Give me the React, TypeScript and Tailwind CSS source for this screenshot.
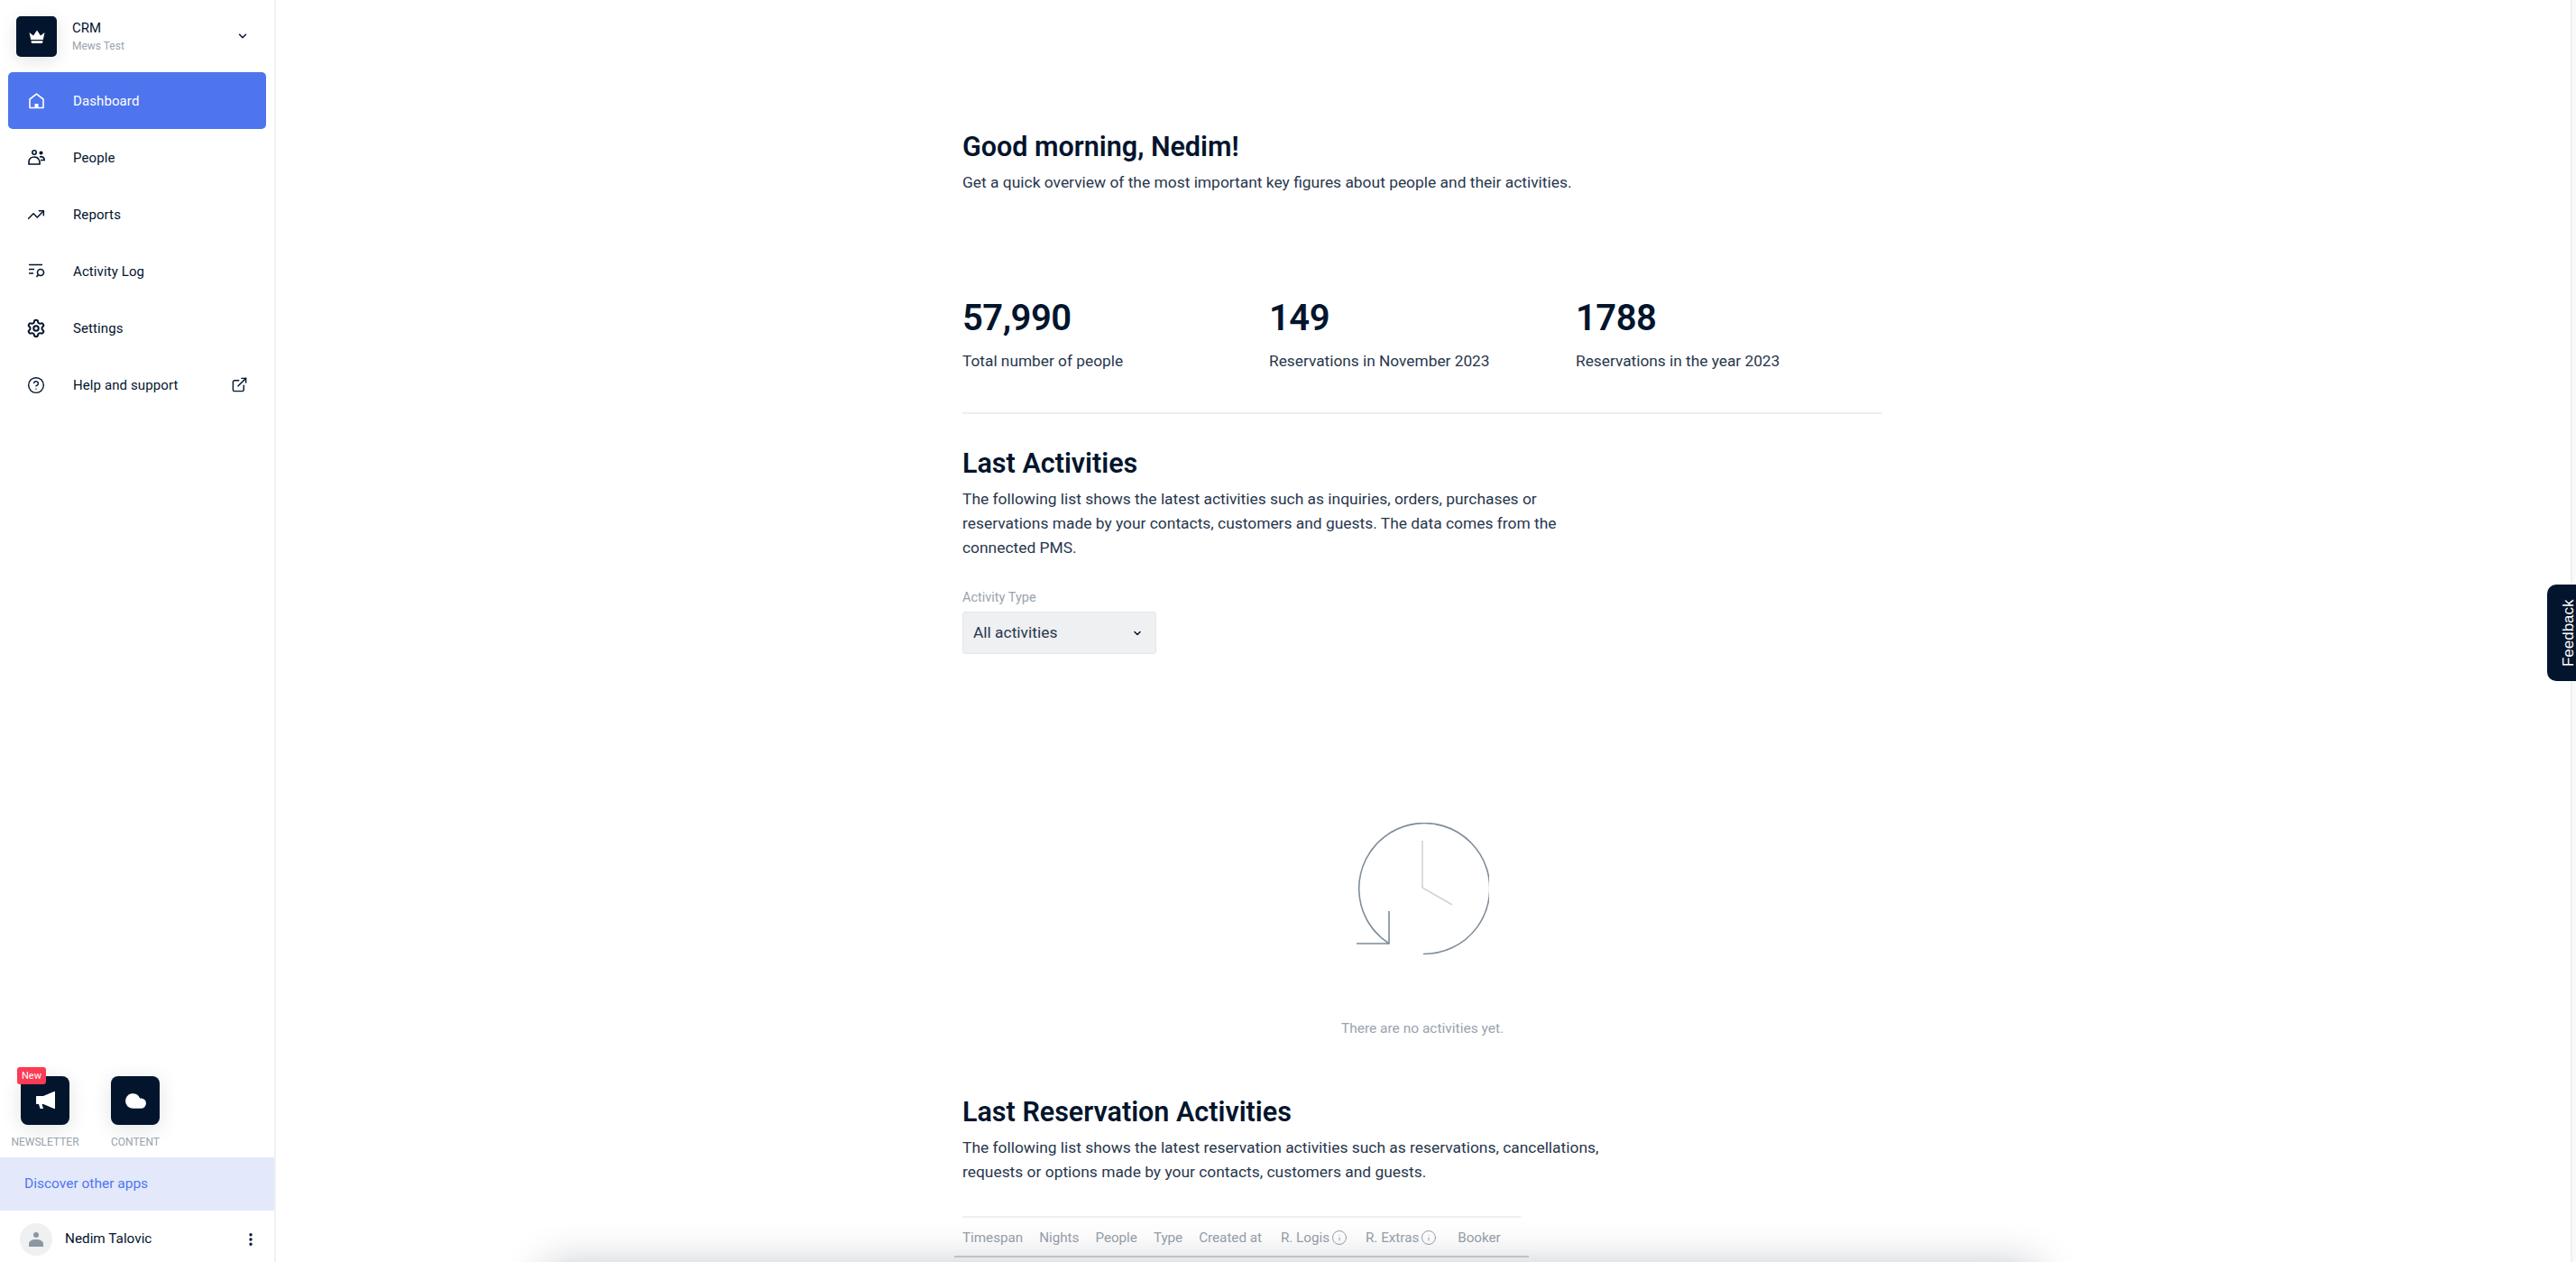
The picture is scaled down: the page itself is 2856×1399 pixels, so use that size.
import { ChevronDown, ExternalLink, EllipsisVertical, Settings, CircleHelp, TrendingUp, Info, Cloud } from "lucide-react";

const font = { fontFamily: '"Roboto", "Noto Sans", sans-serif' };

function HomeIcon() {
  return (
    <svg width="17" height="18" viewBox="0 0 17 18" fill="none" stroke="currentColor" strokeWidth="1.6" strokeLinejoin="round">
      <path d="M8.500 1.200 1 7v9.500h15V7z" />
      <rect x="6.500" y="12" width="4" height="4.500" fill="currentColor" stroke="none" />
    </svg>
  );
}

function CrownIcon() {
  return (
    <svg width="18" height="15" viewBox="0 0 18 15" fill="white">
      <path d="M0.500 3 5 6.500 9 0.500 13 6.500 17.500 3 15.800 11H2.200z" />
      <path d="M2.500 12.300h13L15 15H3z" />
    </svg>
  );
}

function MegaphoneIcon() {
  return (
    <svg width="21" height="20" viewBox="0 0 21 20" fill="white">
      <path d="M0 6c0-.6.4-1 1-1h7l12-5h1v19h-1L8 14H6.500l1.500 5H4.500L3 14H1c-.6 0-1-.4-1-1z" />
    </svg>
  );
}

function PeopleIcon() {
  return (
    <svg width="19" height="17" viewBox="0 0 19 17" fill="none" stroke="currentColor" strokeWidth="1.6">
      <circle cx="7" cy="3" r="2.200" />
      <circle cx="14.500" cy="3.500" r="1.300" fill="currentColor" />
      <path d="M1 16v-2.500C1 10 3.800 8 7 8c2.400 0 4.300 1 5.200 3 .5 1 .8 2 .8 3v2z" />
      <path d="M13 8c2.800-1 5.200.5 5.200 3.500H14" />
    </svg>
  );
}

function LogIcon() {
  return (
    <svg width="19" height="17" viewBox="0 0 19 17" fill="none" stroke="currentColor" strokeWidth="1.600">
      <path d="M1 1.500h15M1 6.500h6M1 11h5" />
      <circle cx="14" cy="10" r="3.500" />
      <path d="M11.500 12.500 9.500 15" />
    </svg>
  );
}

function NavItem({ icon, label, active, trailing }: { icon: React.ReactNode; label: string; active?: boolean; trailing?: React.ReactNode }) {
  return (
    <div className={`mx-[9px] flex h-[63px] items-center rounded-[5px] ${active ? "bg-[#4f75ee] text-white" : "text-[#03152d]"}`}>
      <div className="mr-[10px] flex w-[62px] shrink-0 justify-center">{icon}</div>
      <span className="pt-[2px] text-[15px] tracking-[0.1px]">{label}</span>
      {trailing && <div className="ml-auto mr-[20px]">{trailing}</div>}
    </div>
  );
}

function Sidebar() {
  return (
    <aside className="flex h-[1399px] w-[306px] shrink-0 flex-col border-r-2 border-[#f0f1f3] bg-white">
      <div className="flex h-[80px] items-center pl-[18px] pr-[28px]">
        <div className="flex h-[45px] w-[45px] items-center justify-center rounded-[5px] bg-[#03152d] shadow-[0_4px_18px_rgba(3,21,45,0.12)]">
          <CrownIcon />
        </div>
        <div className="ml-[17px] flex-1">
          <div className="text-[15px] leading-[20px] text-[#03152d]">CRM</div>
          <div className="mt-[2px] text-[12px] leading-[16px] text-[#9aa3ae]">Mews Test</div>
        </div>
        <ChevronDown size={14} strokeWidth={2.5} className="text-[#03152d]" />
      </div>
      <nav className="flex flex-col">
        <NavItem active label="Dashboard" icon={<HomeIcon />} />
        <NavItem label="People" icon={<PeopleIcon />} />
        <NavItem label="Reports" icon={<TrendingUp size={20} strokeWidth={1.8} />} />
        <NavItem label="Activity Log" icon={<LogIcon />} />
        <NavItem label="Settings" icon={<Settings size={22} strokeWidth={2.2} />} />
        <NavItem label="Help and support" icon={<CircleHelp size={20} strokeWidth={1.7} />} trailing={<ExternalLink size={19} strokeWidth={1.8} />} />
      </nav>
      <div className="mt-auto flex items-start pb-[10px] pl-[12px]">
        <div className="flex w-[76px] flex-col items-center">
          <div className="relative flex h-[54px] w-[54px] items-center justify-center rounded-[8px] bg-[#03152d] shadow-[0_4px_22px_rgba(3,21,45,0.12)]">
            <MegaphoneIcon />
            <span className="absolute left-[-4px] top-[-10px] rounded-[3px] bg-[#fb3a54] px-[5px] text-[11px] leading-[19px] text-white">New</span>
          </div>
          <span className="mt-[12px] text-[12px] leading-[14px] text-[#9aa3ae]">NEWSLETTER</span>
        </div>
        <div className="ml-[24px] flex w-[76px] flex-col items-center">
          <div className="flex h-[54px] w-[54px] items-center justify-center rounded-[8px] bg-[#03152d] shadow-[0_4px_22px_rgba(3,21,45,0.12)]">
            <Cloud size={25} fill="white" stroke="white" />
          </div>
          <span className="mt-[12px] text-[12px] leading-[14px] text-[#9aa3ae]">CONTENT</span>
        </div>
      </div>
      <div className="flex h-[59px] items-center bg-[#e3e9fb] pl-[27px] text-[15.500px] text-[#4f75ee]">Discover other apps</div>
      <div className="flex h-[57px] items-center pl-[22px] pr-[17px] pt-[6px]">
        <div className="flex h-[36px] w-[36px] items-center justify-center rounded-full bg-[#eef0f2]">
          <svg width="16" height="17" viewBox="0 0 16 17" fill="#8d97a3">
            <circle cx="8" cy="4" r="3" />
            <path d="M0 17v-3c0-3 3-5 8-5s8 2 8 5v3z" />
          </svg>
        </div>
        <span className="ml-[14px] flex-1 text-[15.300px] text-[#03152d]">Nedim Talovic</span>
        <EllipsisVertical size={18} strokeWidth={2.5} className="text-[#03152d]" />
      </div>
    </aside>
  );
}

function Stat({ value, label }: { value: string; label: string }) {
  return (
    <div className="w-[341px]">
      <div className="text-[40px] font-semibold leading-[50px] tracking-[-0.5px] text-[#03152d]">{value}</div>
      <div className="mt-[10px] text-[17.300px] leading-[24px] text-[#28374d]">{label}</div>
    </div>
  );
}

function Th({ children, info, className = "" }: { children: string; info?: boolean; className?: string }) {
  return (
    <span className={`flex items-center gap-[2px] whitespace-nowrap pt-[3px] text-[15.200px] text-[#97a1ac] ${className}`}>
      {children}
      {info && <Info size={18} strokeWidth={1.2} className="text-[#8d97a3]" />}
    </span>
  );
}

function Main() {
  return (
    <main className="relative h-[1399px] flex-1 overflow-hidden bg-white pr-[2px]">
      <div className="mx-auto w-[1020px] pt-[144px]">
        <h1 className="text-[30.500px] font-semibold leading-[38px] text-[#03152d]">Good morning, Nedim!</h1>
        <p className="mt-[8px] text-[17.400px] leading-[24px] text-[#28374d]">Get a quick overview of the most important key figures about people and their activities.</p>
        <div className="mt-[114px] flex border-b-2 border-[#eeeff1] pb-[45px]">
          <Stat value="57,990" label="Total number of people" />
          <Stat value="149" label="Reservations in November 2023" />
          <Stat value="1788" label="Reservations in the year 2023" />
        </div>
        <h2 className="mt-[36px] text-[30.500px] font-semibold leading-[38px] text-[#03152d]">Last Activities</h2>
        <p className="mt-[7px] w-[720px] text-[17.400px] leading-[27px] text-[#28374d]">
          The following list shows the latest activities such as inquiries, orders, purchases or reservations made by your contacts, customers and guests. The data comes from the connected PMS.
        </p>
        <div className="mt-[32px] text-[14.500px] leading-[20px] text-[#9aa3ae]">Activity Type</div>
        <div className="mt-[5px] flex h-[47px] w-[215px] items-center justify-between rounded-[3px] border border-[#e4e6e9] bg-[#eff0f2] pl-[11px] pr-[14px]">
          <span className="text-[17.400px] text-[#28374d]">All activities</span>
          <ChevronDown size={12} strokeWidth={3} className="text-[#03152d]" />
        </div>
        <div className="mt-[187px] flex w-[1020px] flex-col items-center">
          <svg width="147" height="147" viewBox="0 0 147 147" fill="none" strokeWidth="1.600">
            <path d="M74 145.500A72.500 72.500 0 1 0 36 134" stroke="#7e8b99" />
            <path d="M0 134H36V98" stroke="#7e8b99" />
            <path d="M73 20V72L106 91" stroke="#cfd4d9" />
          </svg>
          <p className="mt-[71px] text-[15.500px] leading-[20px] text-[#9aa3ae]">There are no activities yet.</p>
        </div>
        <h2 className="mt-[64px] text-[30.500px] font-semibold leading-[38px] text-[#03152d]">Last Reservation Activities</h2>
        <p className="mt-[7px] w-[750px] text-[17.400px] leading-[27px] text-[#28374d]">
          The following list shows the latest reservation activities such as reservations, cancellations, requests or options made by your contacts, customers and guests.
        </p>
        <div className="ml-[-9px] mt-[35px] w-[637px] border-b-2 border-[#cfd3d8]">
          <div className="mx-[9px] flex h-[44px] items-center gap-[18px] border-t-2 border-[#eeeff1]">
            <Th>Timespan</Th>
            <Th>Nights</Th>
            <Th>People</Th>
            <Th>Type</Th>
            <Th>Created at</Th>
            <Th info className="ml-[3px]">R. Logis</Th>
            <Th info className="ml-[2px]">R. Extras</Th>
            <Th className="ml-[5px]">Booker</Th>
          </div>
        </div>
      </div>
      <div className="absolute bottom-[-58px] left-[300px] h-[50px] w-[1650px] shadow-[0_0_50px_0_rgba(3,21,45,0.3)]" />
    </main>
  );
}

export default function App() {
  return (
    <div className="relative flex h-[1399px] w-[2856px] overflow-hidden bg-white" style={font}>
      <Sidebar />
      <Main />
      <div className="w-[6px] shrink-0 border-l-2 border-[#f0f0f0] bg-[#fafafa]" />
      <div className="absolute right-0 top-[648px] flex h-[107px] w-[32px] items-center justify-center rounded-l-[10px] bg-[#03152d] pl-[14px]">
        <span className="-rotate-90 whitespace-nowrap text-[17px] text-white" style={{ fontFamily: '"Liberation Sans", sans-serif' }}>Feedback</span>
      </div>
    </div>
  );
}
